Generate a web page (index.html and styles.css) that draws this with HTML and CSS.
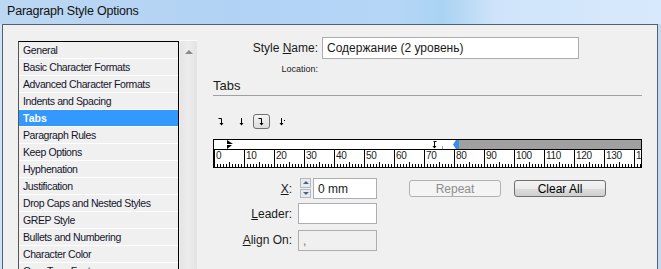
FILE: index.html
```html
<!DOCTYPE html>
<html lang="en">
<head>
  <meta charset="UTF-8">
  <title>Paragraph Style Options</title>
  <link rel="stylesheet" href="styles.css">
</head>
<body>
<div class="window">
  <div class="titlebar">Paragraph Style Options</div>
  <div class="frame">
    <div class="dialog">

      <!-- список категорий -->
      <div class="sidebar">
        <ul class="list">
          <li>General</li>
          <li>Basic Character Formats</li>
          <li>Advanced Character Formats</li>
          <li>Indents and Spacing</li>
          <li class="selected">Tabs</li>
          <li>Paragraph Rules</li>
          <li>Keep Options</li>
          <li>Hyphenation</li>
          <li>Justification</li>
          <li>Drop Caps and Nested Styles</li>
          <li>GREP Style</li>
          <li>Bullets and Numbering</li>
          <li>Character Color</li>
          <li>OpenType Features</li>
        </ul>
        <div class="scrollbar"><span class="scroll-up"></span></div>
      </div>

      <div class="panel">
        <div class="name-row">
          <label class="label">Style <u>N</u>ame:</label>
          <div class="input name-input">Содержание (2 уровень)</div>
        </div>
        <div class="location-row">
          <span class="location">Location:</span>
        </div>

        <div class="section-title">Tabs</div>

        <div class="tab-types">
          <span class="tab-btn">
            <svg width="7" height="9" viewBox="0 0 7 9"><path d="M0.5 1.5H3.5V8" stroke="#000" fill="none"/><path d="M1.5 6H5.5L3.5 8.5Z" fill="#000"/></svg>
          </span>
          <span class="tab-btn">
            <svg width="7" height="9" viewBox="0 0 7 9"><path d="M3.5 1V8" stroke="#000" fill="none"/><path d="M1.5 6H5.5L3.5 8.5Z" fill="#000"/></svg>
          </span>
          <span class="tab-btn active">
            <svg width="7" height="9" viewBox="0 0 7 9"><path d="M0.5 1.5H3.5V8" stroke="#000" fill="none"/><path d="M1.5 6H5.5L3.5 8.5Z" fill="#000"/></svg>
          </span>
          <span class="tab-btn">
            <svg width="8" height="9" viewBox="0 0 8 9"><path d="M3.5 1V8" stroke="#000" fill="none"/><path d="M1.5 6H5.5L3.5 8.5Z" fill="#000"/><rect x="6" y="3" width="1" height="1" fill="#000"/></svg>
          </span>
        </div>

        <div class="ruler">
          <div class="ruler-top">
            <div class="ruler-white">
              <svg class="indent-marker" width="6" height="9" viewBox="0 0 6 9"><path d="M0 0L6 4H0Z M0 5H5L0 9Z" fill="#000"/></svg>
              <svg class="tab-marker" width="7" height="9" viewBox="0 0 7 9"><path d="M2.5 1.5H5.5M3.5 1.5V8" stroke="#000" fill="none"/><path d="M1.5 6H5.5L3.5 8.5Z" fill="#000"/></svg>
              <span class="tick-gray"></span>
            </div>
            <svg class="right-marker" width="7" height="9" viewBox="0 0 7 9"><rect width="7" height="9" fill="#3a8ee6"/><path d="M0 0H4L1 4.5L4 9H0Z" fill="#fff"/></svg>
            <div class="ruler-gray"></div>
          </div>
          <div class="ruler-scale">
            <span>0</span><span>10</span><span>20</span><span>30</span><span>40</span>
            <span>50</span><span>60</span><span>70</span><span>80</span><span>90</span>
            <span>100</span><span>110</span><span>120</span><span>130</span><span>14</span>
          </div>
        </div>

        <div class="bottom">
          <div class="fields">
            <label class="label"><u>X</u>:</label>
            <div class="x-field">
              <div class="spinner">
                <span class="spin up"></span>
                <span class="spin down"></span>
              </div>
              <div class="input x-input">0 mm</div>
            </div>
            <label class="label"><u>L</u>eader:</label>
            <div class="input field-input"></div>
            <label class="label"><u>A</u>lign On:</label>
            <div class="input field-input disabled">,</div>
          </div>
          <div class="buttons">
            <button class="btn" disabled>Repeat</button>
            <button class="btn">Clear All</button>
          </div>
        </div>
      </div>

    </div>
  </div>
</div>
</body>
</html>
```

FILE: styles.css
```css
body {
  margin: 0;
  padding: 0;
  font-family: "Liberation Sans", Arial, sans-serif;
  background: #c7ddf4;
  overflow: hidden;
}
.window {
  width: 661px;
  height: 269px;
  display: flex;
  flex-direction: column;
  overflow: hidden;
}
.titlebar {
  height: 24px;
  flex: none;
  box-sizing: border-box;
  padding: 4px 0 0 7px;
  font-size: 12.5px;
  letter-spacing: -0.2px;
  color: #111;
  background: linear-gradient(to right, #bcd7f2 0%, #b1d2f4 35%, #b5d6f7 60%, #a9d3f2 67%, #cfe4fa 75%, #d7e9fc 100%);
}
.frame {
  flex: 1;
  display: flex;
  padding: 0 3px 0 2px;
  background: linear-gradient(to right, #cfe2f6, #c3daf2);
}
.dialog {
  flex: 1;
  display: flex;
  background: #f0f0f0;
  border: 1px solid #56606d;
  border-bottom: none;
  padding: 15px 0 0 15px;
}

/* список */
.sidebar {
  display: flex;
  align-items: flex-start;
  flex: none;
}
.list {
  list-style: none;
  margin: 1px 0 0 0;
  padding: 0;
  width: 159px;
  border: 1px solid #000;
  border-left-color: #555;
  background: #f0f0f0;
  font-size: 10.5px;
  letter-spacing: -0.4px;
  color: #14142a;
}
.list li {
  height: 16px;
  line-height: 16px;
  padding-left: 4px;
  border-bottom: 1px solid #fff;
  white-space: nowrap;
}
.list li.selected {
  background: #3399ff;
  color: #fff;
  font-weight: bold;
  letter-spacing: 0;
}
.scrollbar {
  width: 17px;
  height: 240px;
  margin-left: 1px;
  box-sizing: border-box;
  border-top: 1px solid #fafafa;
  background: linear-gradient(to right, #e6e6e6, #ececec 50%, #e3e3e3);
  display: flex;
  justify-content: center;
  padding-top: 9px;
}
.scroll-up {
  width: 0;
  height: 0;
  border-left: 4px solid transparent;
  border-right: 4px solid transparent;
  border-bottom: 4px solid #8a8a8a;
}

/* правая часть */
.panel {
  margin-left: 16px;
  width: 429px;
  display: flex;
  flex-direction: column;
  font-size: 12px;
  color: #1a1a1a;
}
.name-row {
  display: grid;
  grid-template-columns: 105px 257px;
  column-gap: 4px;
  align-items: center;
  margin-top: -3px;
}
.label {
  text-align: right;
  white-space: nowrap;
}
.input {
  box-sizing: border-box;
  background: #fff;
  border: 1px solid #abadb3;
  padding-left: 4px;
  font-size: 12px;
  display: flex;
  align-items: center;
}
.name-input {
  height: 22px;
}
.location-row {
  display: grid;
  grid-template-columns: 105px;
  height: 13px;
  margin-top: 4px;
}
.location {
  font-size: 9px;
  text-align: right;
  color: #222;
  line-height: 13px;
}
.section-title {
  font-size: 13px;
  line-height: 15px;
  margin-top: 2px;
  padding-bottom: 2px;
  border-bottom: 1px solid #a0a0a0;
}
.tab-types {
  display: flex;
  gap: 4px;
  margin-top: 18px;
  height: 16px;
}
.tab-btn {
  width: 16px;
  height: 15px;
  box-sizing: border-box;
  display: flex;
  align-items: center;
  justify-content: center;
}
.tab-btn.active {
  width: 17px;
  border: 1px solid #707070;
  border-radius: 3px;
  background: linear-gradient(#f5f5f5, #dcdcdc);
}

/* линейка */
.ruler {
  margin-top: 9px;
  border: 1px solid #000;
  background: #fff;
  overflow: hidden;
}
.ruler-top {
  display: flex;
  height: 9px;
  border-bottom: 1px solid #000;
}
.ruler-white {
  width: 238px;
  position: relative;
}
.indent-marker {
  position: absolute;
  left: 13px;
  top: 0;
}
.tab-marker {
  position: absolute;
  left: 217px;
  top: 0;
}
.tick-gray {
  position: absolute;
  left: 228px;
  top: 6px;
  width: 1px;
  height: 3px;
  background: #a0a0a0;
}
.right-marker {
  flex: none;
}
.ruler-gray {
  flex: 1;
  background: #a0a0a0;
}
.ruler-scale {
  display: flex;
  height: 17px;
  background:
    repeating-linear-gradient(to right, #000 0 1px, transparent 1px 15px) 0 100% / 100% 5px no-repeat,
    repeating-linear-gradient(to right, #000 0 1px, transparent 1px 3px) 0 100% / 100% 3px no-repeat,
    #fff;
}
.ruler-scale span {
  flex: none;
  width: 30px;
  box-sizing: border-box;
  border-left: 1px solid #000;
  padding-left: 1px;
  font-size: 10px;
  line-height: 12px;
  letter-spacing: -0.3px;
  color: #222;
}

/* поля и кнопки */
.bottom {
  display: flex;
  align-items: flex-start;
  margin-top: 10px;
}
.fields {
  display: grid;
  grid-template-columns: 79px 79px;
  column-gap: 6px;
  row-gap: 4px;
  align-items: center;
}
.x-field {
  display: flex;
  gap: 2px;
  padding-left: 2px;
}
.spinner {
  width: 11px;
  height: 20px;
  display: flex;
  flex-direction: column;
  gap: 1px;
}
.spin {
  flex: 1;
  border: 1px solid #b4b8bd;
  background: #e7ebef;
  display: flex;
  align-items: center;
  justify-content: center;
}
.spin.up::after,
.spin.down::after {
  content: "";
  border-left: 3px solid transparent;
  border-right: 3px solid transparent;
}
.spin.up::after {
  border-bottom: 3px solid #4d6185;
}
.spin.down::after {
  border-top: 3px solid #4d6185;
}
.x-input {
  width: 64px;
  height: 21px;
  font-size: 12px;
}
.field-input {
  width: 79px;
  height: 21px;
}
.fields .field-input:last-child {
  margin-top: 2px;
}
.input.disabled {
  background: #f0f0f0;
  border-color: #adadad;
  color: #777;
}
.buttons {
  display: flex;
  gap: 13px;
  margin-left: 32px;
  margin-top: 2px;
}
.btn {
  width: 92px;
  height: 17px;
  padding: 0;
  font-family: "Liberation Sans", Arial, sans-serif;
  font-size: 12px;
  color: #000;
  border: 1px solid #707070;
  border-radius: 3px;
  background: linear-gradient(#f3f3f3 0%, #ebebeb 50%, #dddddd 51%, #cfcfcf 100%);
}
.btn:disabled {
  color: #8d8d8d;
  border-color: #adb2b5;
  background: #f4f4f4;
}
```
